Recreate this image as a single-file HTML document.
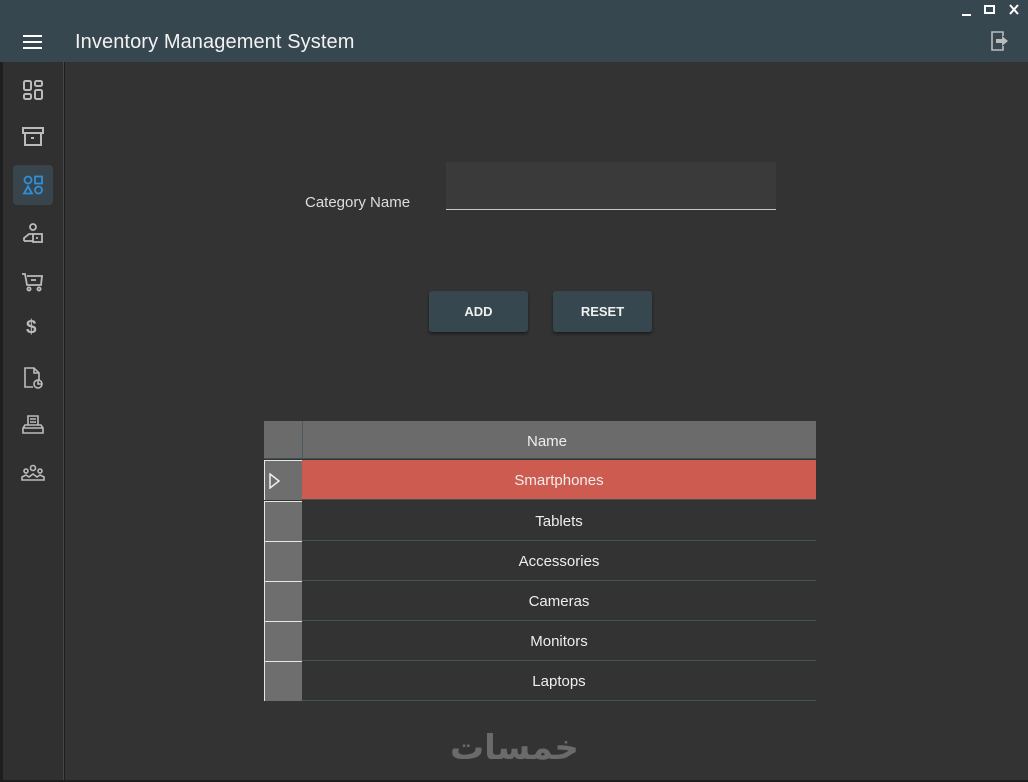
<!DOCTYPE html>
<html><head><meta charset="utf-8"><style>
*{margin:0;padding:0;box-sizing:border-box}
body{width:1028px;height:782px;background:#1e1e1e;font-family:"Liberation Sans",sans-serif;position:relative;overflow:hidden;color:#e8e8e8}
.top{position:absolute;left:0;top:0;width:1028px;height:62px;background:#37474f}
.title{position:absolute;left:75px;top:31px;font-size:20px;color:#f2f2f2;letter-spacing:0.1px}
.side{position:absolute;left:3px;top:62px;width:61px;height:718px;background:#303030;border-right:1px solid #474747}
.main{position:absolute;left:65px;top:62px;width:963px;height:718px;background:#333}
.ic{position:absolute;left:18px;width:24px;height:24px}
.lbl{position:absolute;left:305px;top:194px;font-size:15px;color:#ddd}
.inp{position:absolute;left:446px;top:162px;width:330px;height:48px;background:#3a3a3a;border-bottom:1px solid #c8c8c8}
.btn{position:absolute;top:291px;width:99px;height:41px;background:#36474f;border-radius:3px;box-shadow:0 2px 3px rgba(0,0,0,.45);font-size:13px;font-weight:bold;color:#f0f0f0;text-align:center;line-height:41px}
.tbl{position:absolute;left:264px;top:421px}
.hd{position:absolute;left:0;top:0;width:552px;height:38px;background:#6b6b6b;border-bottom:1px solid #3f4f58}
.hd span{position:absolute;left:38px;width:490px;text-align:center;top:12px;font-size:15px;color:#eee}
.hd i{position:absolute;left:38px;top:0;width:1px;height:38px;background:#4a5960}
.row{position:absolute;left:0;width:552px;height:40px;border-bottom:1px solid #44525a}
.rh{position:absolute;left:0;top:0;width:38px;height:40px;background:#6e6e6e;border-left:1px solid #e6e6e6;border-top:1px solid #e6e6e6}
.cell{position:absolute;left:38px;top:0;width:514px;height:40px;text-align:center;line-height:42px;font-size:15px;color:#eee}
.wm{position:absolute;left:450px;top:728px;font-family:"DejaVu Sans",sans-serif;font-size:34px;color:#6a6a6a;font-weight:bold}
</style></head><body>
<div class="top">
<svg style="position:absolute;left:23px;top:35px" width="20" height="14"><path d="M0 1h19M0 7h19M0 13h19" stroke="#fff" stroke-width="2"/></svg>
<div class="title">Inventory Management System</div>
<svg style="position:absolute;left:960px;top:4px" width="64" height="14"><path d="M2 11h9" stroke="#fff" stroke-width="2"/><rect x="25" y="2" width="9" height="7" fill="none" stroke="#fff" stroke-width="2"/><path d="M50 1l8 9M58 1l-8 9" stroke="#fff" stroke-width="2"/></svg>
<svg style="position:absolute;left:990px;top:30px" width="20" height="22"><path d="M9 2H2v18h7M9 2h4v4M9 20h4v-4" fill="none" stroke="#bbb" stroke-width="1.6"/><path d="M6 9h6V6l6 5-6 5v-3H6z" fill="#bbb"/></svg>
</div>
<div class="side">
<svg class="ic" style="top:16px" viewBox="0 0 24 24" fill="none" stroke="#bbb" stroke-width="2"><rect x="3" y="3" width="7" height="9" rx="1.5"/><rect x="14" y="3" width="7" height="5" rx="1.5"/><rect x="3" y="16" width="7" height="5" rx="1.5"/><rect x="14" y="12" width="7" height="9" rx="1.5"/></svg>
<svg class="ic" style="top:63px" viewBox="0 0 24 24" fill="none" stroke="#bbb" stroke-width="2"><rect x="2" y="3" width="20" height="5"/><path d="M4 8v12h16V8M10 13h3"/></svg>
<div style="position:absolute;left:10px;top:103px;width:40px;height:40px;background:#38454c;border-radius:4px"></div>
<svg class="ic" style="top:111px" viewBox="0 0 24 24" fill="none" stroke="#2f8fd8" stroke-width="1.8"><circle cx="7" cy="7" r="3.5"/><rect x="14" y="3.5" width="7" height="7"/><path d="M7 13.5l4 7H3z"/><circle cx="17.5" cy="17" r="3.5"/></svg>
<svg class="ic" style="top:160px" viewBox="0 0 24 24" fill="none" stroke="#bbb" stroke-width="1.8"><circle cx="12" cy="5" r="3"/><path d="M3 19v-3l5-4h4"/><rect x="12" y="12" width="9" height="8"/><path d="M3 19h9M15 16h2"/></svg>
<svg class="ic" style="top:208px" viewBox="0 0 24 24" fill="none" stroke="#bbb" stroke-width="1.8"><path d="M1 4h3l2 11h14l1-9H6"/><path d="M10 10h5"/><circle cx="8" cy="19" r="1.6"/><circle cx="18" cy="19" r="1.6"/></svg>
<div style="position:absolute;left:23px;top:255px;font-size:19px;font-weight:bold;color:#bbb">$</div>
<svg class="ic" style="top:304px" viewBox="0 0 24 24" fill="none" stroke="#bbb" stroke-width="1.6"><path d="M12 21H4V2h9l5 5v7M13 2v5h5"/><circle cx="17" cy="18" r="4"/><path d="M17 14v4h4"/></svg>
<svg class="ic" style="top:351px" viewBox="0 0 24 24" fill="none" stroke="#bbb" stroke-width="1.6"><path d="M7 12V3h10v9M9 6h6M9 9h6"/><path d="M4 12h16l2 3v5H2v-5z"/><path d="M2 15h20"/></svg>
<svg class="ic" style="top:400px" viewBox="0 0 24 24" fill="none" stroke="#bbb" stroke-width="1.6"><circle cx="12" cy="6" r="2.5"/><circle cx="5" cy="9" r="2"/><circle cx="19" cy="9" r="2"/><path d="M1 18v-3l4-2 3 2 4-3 4 3 3-2 4 2v3z"/></svg>
</div>
<div class="main"></div>
<div class="lbl">Category Name</div>
<div class="inp"></div>
<div class="btn" style="left:429px">ADD</div>
<div class="btn" style="left:553px">RESET</div>
<div class="tbl">
<div class="hd"><i></i><span>Name</span></div>
<div class="row" style="top:39px"><div class="rh"><svg width="14" height="16" style="position:absolute;left:3px;top:12px"><path d="M2 1l9 7-9 7z" fill="none" stroke="#eee" stroke-width="1.5"/></svg></div><div class="cell" style="background:#cd5b4f;height:39px;line-height:42px">Smartphones</div></div>
<div class="row" style="top:80px"><div class="rh"></div><div class="cell">Tablets</div></div>
<div class="row" style="top:120px"><div class="rh"></div><div class="cell">Accessories</div></div>
<div class="row" style="top:160px"><div class="rh"></div><div class="cell">Cameras</div></div>
<div class="row" style="top:200px"><div class="rh"></div><div class="cell">Monitors</div></div>
<div class="row" style="top:240px"><div class="rh"></div><div class="cell">Laptops</div></div>
</div>
<div class="wm">خمسات</div>
</body></html>
